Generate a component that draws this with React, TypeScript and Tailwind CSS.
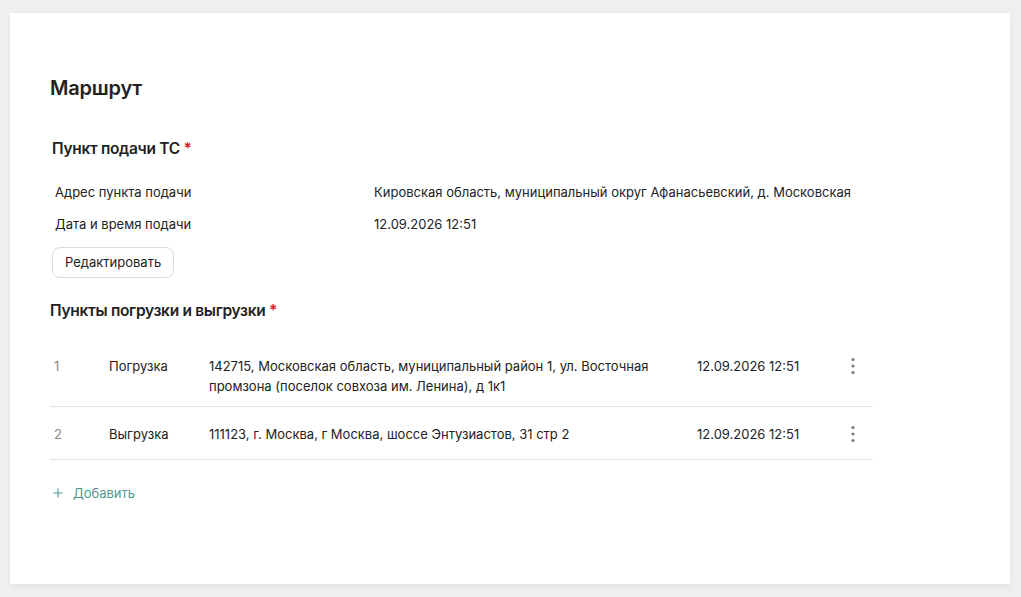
import { Plus } from "lucide-react";

const points = [
  {
    n: 1,
    type: "Погрузка",
    address:
      "142715, Московская область, муниципальный район 1, ул. Восточная промзона (поселок совхоза им. Ленина), д 1к1",
    date: "12.09.2026 12:51",
    pad: "pt-[18px] pb-[10px]",
  },
  {
    n: 2,
    type: "Выгрузка",
    address: "111123, г. Москва, г Москва, шоссе Энтузиастов, 31 стр 2",
    date: "12.09.2026 12:51",
    pad: "pt-[17px] pb-[15px]",
  },
];

function Dots() {
  return (
    <svg width="6" height="20" viewBox="0 0 6 20" fill="#7a7a7a">
      <circle cx="3" cy="3.5" r="1.6" />
      <circle cx="3" cy="10" r="1.6" />
      <circle cx="3" cy="16.5" r="1.6" />
    </svg>
  );
}

export default function App() {
  return (
    <div className="min-h-[597px] bg-[#efefef] pl-[10px] pr-[11px] pt-[13px] pb-[13px] font-['Inter',sans-serif] text-[#222]">
      <section className="h-[571px] bg-white px-[40px] pt-[61px] shadow-[0_2px_6px_rgba(0,0,0,0.06)]">
        <h1 className="text-[20px] font-semibold leading-[28px] tracking-[-0.2px]">Маршрут</h1>

        {/* Пункт подачи */}
        <h2 className="mt-[36px] ml-[2px] text-[15.5px] font-semibold leading-[22px] tracking-[-0.3px]">
          Пункт подачи ТС <span className="text-[#d2232a]">*</span>
        </h2>
        <div className="mt-[23px] ml-[5px] grid grid-cols-[319px_1fr] gap-y-[14px] text-[13px] leading-[18px]">
          <div>Адрес пункта подачи</div>
          <div>Кировская область, муниципальный округ Афанасьевский, д. Московская</div>
          <div>Дата и время подачи</div>
          <div>12.09.2026 12:51</div>
        </div>
        <button className="mt-[14px] ml-[2px] h-[31px] rounded-[8px] border border-[#dcdcdc] px-[12px] text-[13px]">
          Редактировать
        </button>

        {/* Пункты погрузки и выгрузки */}
        <h2 className="mt-[22px] text-[15.5px] font-semibold leading-[22px] tracking-[-0.3px]">
          Пункты погрузки и выгрузки <span className="text-[#d2232a]">*</span>
        </h2>
        <div className="mt-[16px] w-[823px]">
          {points.map((p) => (
            <div
              key={p.n}
              className={`flex items-start border-b border-[#e3e3e3] text-[13px] leading-[20px] ${p.pad}`}
            >
              <div className="w-[59px] pl-[4px] text-[#888]">{p.n}</div>
              <div className="w-[100px]">{p.type}</div>
              <div className="w-[488px] pr-[30px]">{p.address}</div>
              <div className="w-[146px]">{p.date}</div>
              <div className="flex w-[20px] justify-center">
                <Dots />
              </div>
            </div>
          ))}
        </div>

        <button className="mt-[23px] ml-[1px] flex items-center gap-[8px] text-[13px] leading-[20px] text-[#4e9a93]">
          <Plus size={14} strokeWidth={2} />
          Добавить
        </button>
      </section>
    </div>
  );
}
